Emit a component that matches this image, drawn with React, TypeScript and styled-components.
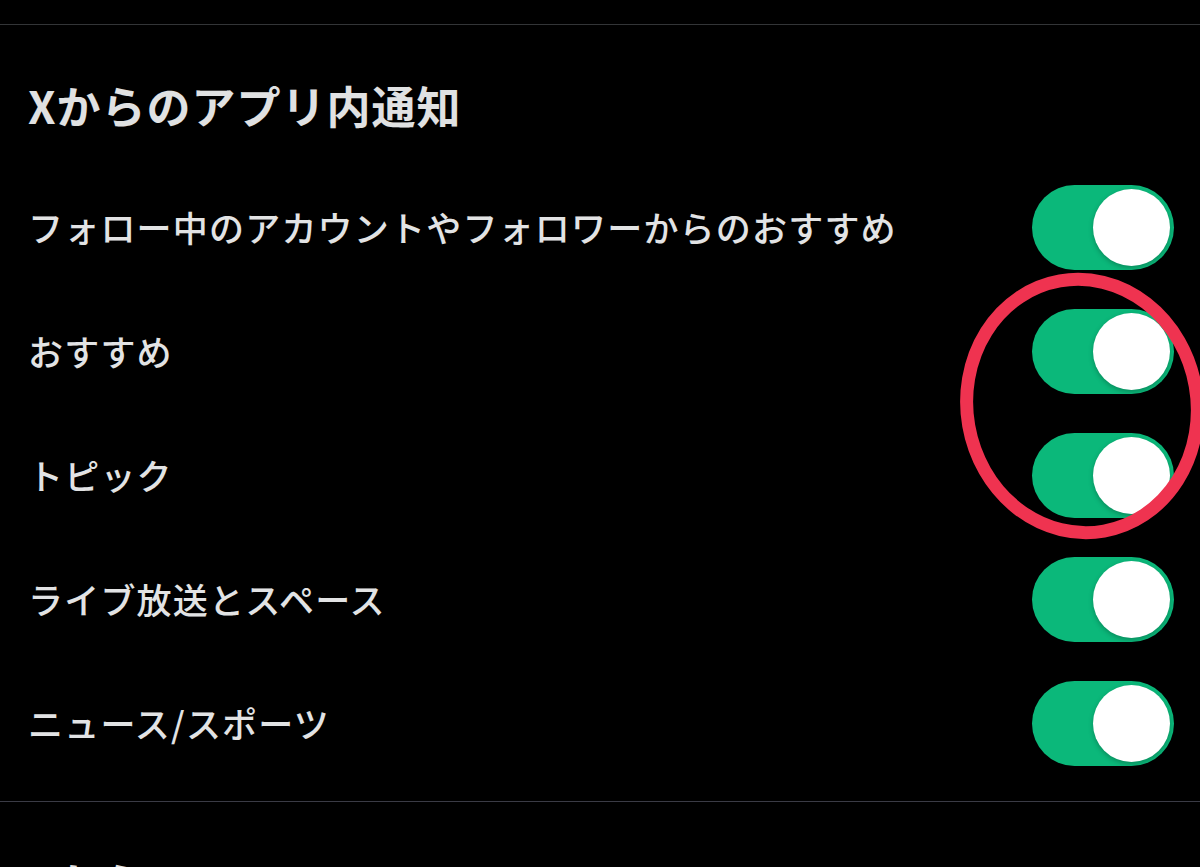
import React from "react";
import styled, { createGlobalStyle } from "styled-components";

type ToggleItem = {
  label: string;
  on: boolean;
};

const items: ToggleItem[] = [
  { label: "フォロー中のアカウントやフォロワーからのおすすめ", on: true },
  { label: "おすすめ", on: true },
  { label: "トピック", on: true },
  { label: "ライブ放送とスペース", on: true },
  { label: "ニュース/スポーツ", on: true },
];

const Toggle = ({ on }: { on: boolean }): JSX.Element => {
  return (
    <Track $on={on}>
      <Knob />
    </Track>
  );
};

const App = (): JSX.Element => {
  return (
    <Page>
      <GlobalStyle />
      <TopBar />

      <Section>
        <SectionTitle>Xからのアプリ内通知</SectionTitle>
        {items.map((item) => (
          <Row key={item.label}>
            <Label>{item.label}</Label>
            <Toggle on={item.on} />
          </Row>
        ))}
      </Section>

      <Section>
        <SectionTitle>Xからの</SectionTitle>
      </Section>

      {/* red hand-drawn mark over the 2nd and 3rd toggles */}
      <Annotation viewBox="0 0 1200 867">
        <ellipse
          cx="1082"
          cy="406"
          rx="115"
          ry="127"
          transform="rotate(-10 1082 406)"
          fill="none"
          stroke="#ef3350"
          strokeWidth="13"
        />
      </Annotation>
    </Page>
  );
};

const GlobalStyle = createGlobalStyle`
  html, body {
    margin: 0;
    padding: 0;
    background: #000;
    overflow: hidden;
  }
  * {
    box-sizing: border-box;
  }
`;

const Page = styled.div`
  position: relative;
  width: 1200px;
  height: 867px;
  overflow: hidden;
  background: #000;
  color: #e2e3e4;
  font-family: "Noto Sans CJK JP", "Noto Sans", sans-serif;
`;

const TopBar = styled.div`
  height: 25px;
  border-bottom: 1px solid #333537;
`;

const Section = styled.section`
  padding: 0 26px 16px 28px;
  border-bottom: 1px solid #3a3b45;
  &:last-of-type {
    border-bottom: none;
  }
`;

const SectionTitle = styled.h2`
  margin: 52px 0 32px;
  padding: 0;
  font-size: 44px;
  line-height: 56px;
  font-weight: 700;
  letter-spacing: 1px;
  color: #e0e1e2;
`;

const Row = styled.div`
  display: flex;
  align-items: center;
  justify-content: space-between;
  height: 124px;
`;

const Label = styled.span`
  font-size: 35px;
  line-height: 48px;
  font-weight: 500;
  letter-spacing: 1.2px;
  color: #e2e3e4;
`;

const Track = styled.div<{ $on: boolean }>`
  display: flex;
  align-items: center;
  justify-content: ${({ $on }) => ($on ? "flex-end" : "flex-start")};
  width: 142px;
  height: 85px;
  padding: 0 4px;
  border-radius: 43px;
  background: ${({ $on }) => ($on ? "#0bb87a" : "#3a3b3d")};
  flex-shrink: 0;
`;

const Knob = styled.div`
  width: 77px;
  height: 77px;
  border-radius: 50%;
  background: #ffffff;
  box-shadow: 0 2px 5px rgba(0, 0, 0, 0.25);
`;

const Annotation = styled.svg`
  position: absolute;
  left: 0;
  top: 0;
  width: 1200px;
  height: 867px;
  pointer-events: none;
`;

export default App;
